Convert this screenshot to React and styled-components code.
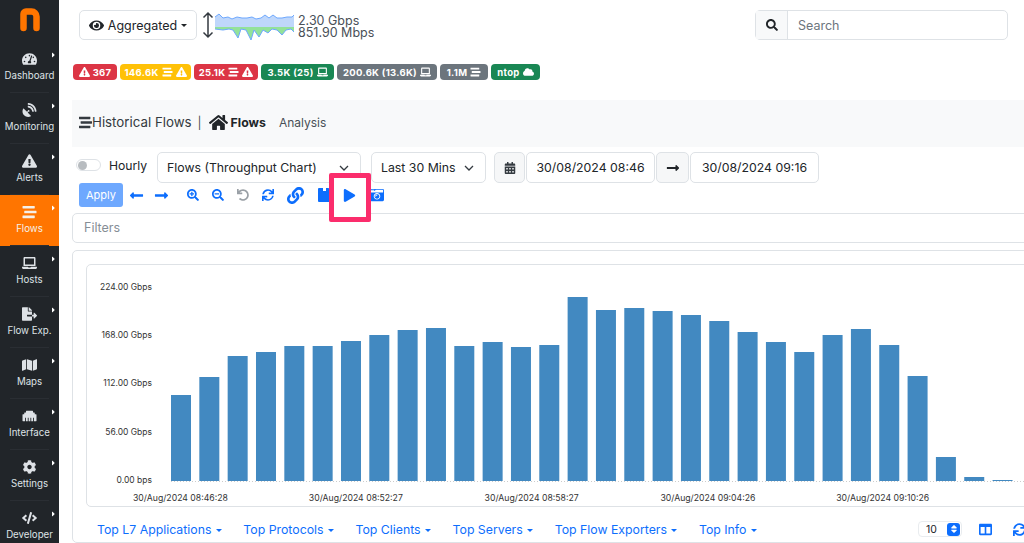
import React from "react";
import styled, { createGlobalStyle } from "styled-components";
import {
  FaCalendarAlt, FaCameraRetro, FaCaretRight, FaCloud, FaCode, FaCog, FaColumns,
  FaEthernet, FaExclamationTriangle, FaEye, FaFileExport, FaHome, FaLaptop, FaLink, FaLongArrowAltLeft,
  FaLongArrowAltRight, FaMap, FaPlay, FaSatelliteDish, FaSearch, FaSearchMinus, FaSearchPlus,
  FaStream, FaSync, FaTachometerAlt, FaUndo, FaSort,
} from "react-icons/fa";

const GlobalStyle = createGlobalStyle`
  html, body { margin: 0; padding: 0; background: #fff; overflow: hidden; }
  body { font-family: Inter, "Liberation Sans", sans-serif; color: #212529; }
  * { box-sizing: border-box; }
`;

//--- LAYOUT ---//

const Page = styled.div`
  display: flex;
  width: 1024px;
  height: 543px;
  overflow: hidden;
`;

const Sidebar = styled.nav`
  flex: 0 0 59px;
  background: #212529;
  display: flex;
  flex-direction: column;
  overflow: hidden;
`;

const Logo = styled.div`
  flex: 0 0 42px;
  display: flex;
  justify-content: center;
  padding-top: 5px;
`;

const NavItem = styled.div`
  position: relative;
  flex: 0 0 51px;
  display: flex;
  flex-direction: column;
  align-items: center;
  padding-top: 10px;
  gap: 4px;
  color: ${({ $active }) => ($active ? "#f5f0e8" : "#dee2e6")};
  background: ${({ $active }) => ($active ? "#ff7500" : "transparent")};
  font-size: 9.7px;
  line-height: 12px;
  white-space: nowrap;
  svg.main { width: 15px; height: 14px; }
  &::after {
    content: "";
    position: absolute;
    left: 10px;
    right: 10px;
    bottom: 0;
    height: 1px;
    background: #2a2e33;
  }
`;

const NavCaret = styled(FaCaretRight)`
  position: absolute;
  top: 9px;
  right: 2px;
  width: 7px;
  height: 8px;
  color: #fff;
`;

const Main = styled.main`
  flex: 1;
  min-width: 0;
  padding-left: 13px;
  display: flex;
  flex-direction: column;
  position: relative;
`;

//--- TOP BAR ---//

const TopBar = styled.header`
  display: flex;
  align-items: center;
  height: 30px;
  margin-top: 10px;
  padding-left: 7px;
`;

const ViewButton = styled.button`
  width: 118px;
  height: 30px;
  border: 1px solid #dee2e6;
  border-radius: 5px;
  background: #fff;
  display: flex;
  align-items: center;
  justify-content: center;
  gap: 4px;
  font: 400 12.5px Inter, sans-serif;
  color: #212529;
  padding: 0;
`;

const Caret = styled.span`
  display: inline-block;
  width: 0;
  height: 0;
  border-left: 3.5px solid transparent;
  border-right: 3.5px solid transparent;
  border-top: 3.5px solid ${({ $color }) => $color || "currentColor"};
  margin-left: ${({ $left }) => $left || 0}px;
  vertical-align: middle;
`;

const Speed = styled.div`
  font-size: 12.5px;
  line-height: 12px;
  color: #495057;
  margin-left: 3px;
  padding-top: 4px;
`;

const Search = styled.div`
  margin-left: auto;
  margin-right: 16px;
  width: 253px;
  height: 30px;
  display: flex;
  border: 1px solid #dee2e6;
  border-radius: 5px;
  font-size: 12.5px;
  color: #6c757d;
`;

const SearchIcon = styled.div`
  width: 32px;
  display: flex;
  align-items: center;
  justify-content: center;
  background: #f8f9fa;
  border-right: 1px solid #dee2e6;
  color: #212529;
`;

const SearchText = styled.div`
  padding-left: 10px;
  line-height: 29px;
`;

const Badges = styled.div`
  display: flex;
  gap: 3px;
  margin-top: 24px;
  padding-left: 1px;
`;

const Badge = styled.span`
  height: 16px;
  width: ${({ $w }) => $w}px;
  border-radius: 4px;
  display: inline-flex;
  align-items: center;
  justify-content: center;
  gap: 3px;
  font-size: 9.5px;
  font-weight: 700;
  letter-spacing: 0.3px;
  color: #fff;
  white-space: nowrap;
  background: ${({ $bg }) => $bg};
  svg { width: 11px; height: 10px; }
`;

//--- TITLE ---//

const TitleBar = styled.div`
  margin-top: 20px;
  height: 47px;
  padding: 0 0 3px 7px;
  background: #f8f9fa;
  display: flex;
  align-items: center;
  font-size: 13.3px;
  color: #343a40;
`;

const Separator = styled.span`
  margin: 0 7px 0 6px;
  font-size: 12px;
  color: #495057;
`;

const ActiveTab = styled.span`
  display: inline-flex;
  align-items: center;
  gap: 3px;
  font-size: 12.3px;
  font-weight: 700;
  color: #212529;
`;

const PlainTab = styled.span`
  margin-left: 13px;
  font-size: 12px;
  color: #495057;
`;

//--- FILTER CONTROLS ---//

const Controls = styled.div`
  position: relative;
  margin-top: 5px;
`;

const ControlRow = styled.div`
  display: flex;
  align-items: center;
  height: 31px;
  padding-left: 4px;
`;

const Toggle = styled.span`
  width: 25px;
  height: 12px;
  margin-bottom: 5px;
  border: 1px solid #dee2e6;
  border-radius: 6px;
  background: #fff;
  display: flex;
  align-items: center;
  padding-left: 1px;
  &::before {
    content: "";
    width: 9px;
    height: 9px;
    border-radius: 50%;
    background: #b8bcc0;
  }
`;

const ToggleLabel = styled.span`
  width: 48px;
  margin-left: 8px;
  font-size: 12.2px;
  color: #212529;
  padding-bottom: 4px;
`;

const Select = styled.div`
  width: ${({ $w }) => $w}px;
  height: 31px;
  margin-right: ${({ $right }) => $right || 0}px;
  border: 1px solid #dee2e6;
  border-radius: 5px;
  background: #fff;
  display: flex;
  align-items: center;
  justify-content: space-between;
  padding: 0 11px 0 9px;
  font-size: 12.3px;
  color: #212529;
  white-space: nowrap;
`;

const Addon = styled.div`
  width: ${({ $w }) => $w}px;
  height: 31px;
  margin-left: ${({ $left }) => $left ?? 1}px;
  margin-right: 1px;
  border: 1px solid #dee2e6;
  border-radius: 5px;
  background: #f6f7f8;
  display: flex;
  align-items: center;
  justify-content: center;
  color: #343a40;
`;

const DateBox = styled.div`
  width: ${({ $w }) => $w}px;
  height: 31px;
  border: 1px solid #dee2e6;
  border-radius: 5px;
  display: flex;
  align-items: center;
  justify-content: center;
  font-size: 12.3px;
  color: #212529;
`;

const ActionRow = styled.div`
  display: flex;
  align-items: center;
  height: 24px;
  padding-left: 7px;
`;

const ApplyButton = styled.button`
  width: 44px;
  height: 24px;
  border: 0;
  border-radius: 3px;
  background: #6ea8fe;
  color: #fff;
  font: 400 11px Inter, sans-serif;
  margin-right: 1px;
  padding: 0;
`;

const IconButton = styled.span`
  width: 25px;
  display: flex;
  justify-content: center;
  margin-left: ${({ $left }) => $left || 0}px;
  color: ${({ $muted }) => ($muted ? "#9aa0a6" : "#0d6efd")};
  svg { width: ${({ $size }) => $size || 12}px; height: ${({ $size }) => $size || 12}px; }
`;

const Highlight = styled.div`
  position: absolute;
  left: 257px;
  top: 21px;
  width: 42px;
  height: 49px;
  border: 5px solid #fb2d6c;
  border-radius: 2px;
  background: #fff;
  pointer-events: none;
`;

const PlayMark = styled(FaPlay)`
  position: absolute;
  left: 9px;
  top: 11px;
  width: 13px;
  height: 13px;
  color: #0d6efd;
`;

const FilterInput = styled.div`
  margin-top: 6px;
  height: 30px;
  width: 980px;
  border: 1px solid #dee2e6;
  border-radius: 5px;
  padding-left: 11px;
  font-size: 12.5px;
  line-height: 28px;
  color: #868e96;
`;

//--- CHART CARD ---//

const Card = styled.section`
  margin-top: 7px;
  width: 980px;
  border: 1px solid #dee2e6;
  border-radius: 5px;
  padding: 13px 13px 0;
  flex: 1;
`;

const ChartBox = styled.div`
  width: 960px;
  height: 243px;
  border: 1px solid #dee2e6;
  border-radius: 5px;
`;

const Tabs = styled.div`
  display: flex;
  align-items: center;
  height: 22px;
  margin-top: 11px;
  padding-left: 11px;
  font-size: 12.3px;
  color: #0d6efd;
  width: 940px;
`;

const TabLink = styled.span`
  margin-right: 21.500px;
  white-space: nowrap;
`;

const PageSize = styled.div`
  margin-left: auto;
  width: 44px;
  height: 16px;
  border: 1px solid #e9ecef;
  border-radius: 4px;
  display: flex;
  align-items: center;
  justify-content: space-between;
  padding: 0 1px 0 7px;
  font-size: 10.5px;
  color: #212529;
`;

const Stepper = styled.span`
  width: 13px;
  height: 13px;
  border-radius: 3px;
  background: #0d6efd;
  color: #fff;
  display: flex;
  align-items: center;
  justify-content: center;
  svg { width: 8px; height: 10px; }
`;

const TabIcon = styled.span`
  display: flex;
  margin-left: ${({ $left }) => $left}px;
  color: #0d6efd;
`;

//--- DATA ---//

const navItems = [
  { label: "Dashboard", Icon: FaTachometerAlt },
  { label: "Monitoring", Icon: FaSatelliteDish },
  { label: "Alerts", Icon: FaExclamationTriangle },
  { label: "Flows", Icon: FaStream, active: true },
  { label: "Hosts", Icon: FaLaptop },
  { label: "Flow Exp.", Icon: FaFileExport },
  { label: "Maps", Icon: FaMap },
  { label: "Interface", Icon: FaEthernet },
  { label: "Settings", Icon: FaCog },
  { label: "Developer", Icon: FaCode },
];

const barTops = [395, 377, 356, 352, 346, 346, 341, 335, 330, 328, 346, 342, 347, 345, 297, 310, 308, 311, 315, 321, 332, 342, 352, 335, 329, 345, 376, 457, 477, 480];
const yLabels = ["224.00 Gbps", "168.00 Gbps", "112.00 Gbps", "56.00 Gbps", "0.00 bps"];
const xLabels = ["30/Aug/2024 08:46:28", "30/Aug/2024 08:52:27", "30/Aug/2024 08:58:27", "30/Aug/2024 09:04:26", "30/Aug/2024 09:10:26"];

const upper = "0,7 4,4 8,8 13,7 17,9 22,7 27,8 32,8 37,7 41,9 46,8 50,5 54,8 58,5 62,8 67,8 72,7 77,7 79,5";
const lower = "0,19 8,20 14,19 18,20 23,28 26,19 31,20 36,30 39,20 44,27 48,20 53,23 57,19 62,20 67,25 71,20 76,19 79,22";

const Sparkline = () => (
  <svg width="80" height="30" viewBox="0 0 80 30" style={{ marginLeft: 1 }}>
    <polygon points={`${upper} 79,17 0,17`} fill="#bfd7fb" />
    <polyline points={upper} fill="none" stroke="#6ea8fe" strokeWidth="1" />
    <polygon points={`${lower} 79,17 0,17`} fill="#93e29a" />
    <polyline points={lower} fill="none" stroke="#6ea8fe" strokeWidth="1" />
  </svg>
);

const UpDownArrow = () => (
  <svg width="12" height="28" viewBox="0 0 12 28" style={{ marginLeft: 5 }}>
    <path d="M6 2v24M1.5 6.5L6 2l4.500 4.500M1.5 21.500L6 26l4.500-4.500" fill="none" stroke="#343a40" strokeWidth="1.500" />
  </svg>
);

const ChevronDown = () => (
  <svg width="10" height="6" viewBox="0 0 10 6">
    <path d="M1 1l4 4 4-4" fill="none" stroke="#343a40" strokeWidth="1.3" />
  </svg>
);

const SaveIcon = () => (
  <svg viewBox="0 0 14 14" fill="currentColor" style={{ width: 14, height: 14 }}>
    <path d="M0 1a1 1 0 0 1 1-1h9.500L14 3.500V13a1 1 0 0 1-1 1H1a1 1 0 0 1-1-1z" />
    <rect x="5" y="0" width="3" height="3" fill="#fff" />
  </svg>
);

// svg origin sits at the chart box corner (87, 265 on the page)
const Chart = () => (
  <svg width="958" height="241" viewBox="0 0 958 241">
    {yLabels.map((label, i) => (
      <text key={label} x="65" y={25 + i * 48.2} textAnchor="end" fontSize="8.5" fill="#333" fontFamily="Inter, sans-serif">
        {label}
      </text>
    ))}
    {barTops.map((top, i) => (
      <rect key={i} x={84 + i * 28.33} y={top - 265} width="20" height={481 - top} fill="#4289c1" />
    ))}
    <line x1="84" y1="216.5" x2="940" y2="216.5" stroke="#ccc" strokeDasharray="1 2" />
    {xLabels.map((label, i) => (
      <text key={label} x={46 + i * 175.8} y="236" fontSize="8.7" fill="#333" fontFamily="Inter, sans-serif">
        {label}
      </text>
    ))}
  </svg>
);

const App = () => (
  <Page>
    <GlobalStyle />
    <Sidebar>
      <Logo>
        <svg width="22" height="28" viewBox="0 0 22 28">
          <path d="M4.500 23V9a2.500 2.500 0 0 1 2.500-2.500h5.500a5 5 0 0 1 5 5V23" fill="none" stroke="#ff7500" strokeWidth="6.500" strokeLinecap="round" strokeLinejoin="round" />
        </svg>
      </Logo>
      {navItems.map(({ label, Icon, active }) => (
        <NavItem key={label} $active={active}>
          <Icon className="main" />
          {label}
          <NavCaret />
        </NavItem>
      ))}
    </Sidebar>
    <Main>
      <TopBar>
        <ViewButton>
          <FaEye size={15} /> Aggregated <Caret />
        </ViewButton>
        <UpDownArrow />
        <Sparkline />
        <Speed>
          2.30 Gbps
          <br />
          851.90 Mbps
        </Speed>
        <Search>
          <SearchIcon>
            <FaSearch size={12} />
          </SearchIcon>
          <SearchText>Search</SearchText>
        </Search>
      </TopBar>

      <Badges>
        <Badge $bg="#dc3545" $w={44}>
          <FaExclamationTriangle /> 367
        </Badge>
        <Badge $bg="#ffc107" $w={71}>
          146.6K <FaStream /> <FaExclamationTriangle />
        </Badge>
        <Badge $bg="#dc3545" $w={64}>
          25.1K <FaStream /> <FaExclamationTriangle />
        </Badge>
        <Badge $bg="#198754" $w={73}>
          3.5K (25) <FaLaptop />
        </Badge>
        <Badge $bg="#6c757d" $w={100}>
          200.6K (13.6K) <FaLaptop />
        </Badge>
        <Badge $bg="#6c757d" $w={48}>
          1.1M <FaStream />
        </Badge>
        <Badge $bg="#198754" $w={49}>
          ntop <FaCloud />
        </Badge>
      </Badges>

      <TitleBar>
        <FaStream size={13} />
        Historical Flows
        <Separator>|</Separator>
        <ActiveTab>
          <FaHome size={19} /> Flows
        </ActiveTab>
        <PlainTab>Analysis</PlainTab>
      </TitleBar>

      <Controls>
        <ControlRow>
          <Toggle />
          <ToggleLabel>Hourly</ToggleLabel>
          <Select $w={204} $right={10}>
            Flows (Throughput Chart)
            <ChevronDown />
          </Select>
          <Select $w={115} $right={8}>
            Last 30 Mins
            <ChevronDown />
          </Select>
          <Addon $w={31} $left={0}>
            <FaCalendarAlt size={12} />
          </Addon>
          <DateBox $w={129}>30/08/2024 08:46</DateBox>
          <Addon $w={33}>
            <FaLongArrowAltRight size={14} color="#212529" />
          </Addon>
          <DateBox $w={129}>30/08/2024 09:16</DateBox>
        </ControlRow>
        <ActionRow>
          <ApplyButton>Apply</ApplyButton>
          <IconButton $size={15}><FaLongArrowAltLeft /></IconButton>
          <IconButton $size={15}><FaLongArrowAltRight /></IconButton>
          <IconButton $left={6}><FaSearchPlus /></IconButton>
          <IconButton><FaSearchMinus /></IconButton>
          <IconButton $muted><FaUndo /></IconButton>
          <IconButton><FaSync /></IconButton>
          <IconButton $left={3} $size={17}><FaLink /></IconButton>
          <IconButton $left={4}><SaveIcon /></IconButton>
          <IconButton $left={27} $size={14}><FaCameraRetro /></IconButton>
        </ActionRow>
        <Highlight>
          <PlayMark />
        </Highlight>
        <FilterInput>Filters</FilterInput>
      </Controls>

      <Card>
        <ChartBox>
          <Chart />
        </ChartBox>
        <Tabs>
          <TabLink>Top L7 Applications <Caret $left={1} /></TabLink>
          <TabLink>Top Protocols <Caret $left={1} /></TabLink>
          <TabLink>Top Clients <Caret $left={1} /></TabLink>
          <TabLink>Top Servers <Caret $left={1} /></TabLink>
          <TabLink>Top Flow Exporters <Caret $left={1} /></TabLink>
          <TabLink>Top Info <Caret $left={1} /></TabLink>
          <PageSize>
            10
            <Stepper><FaSort /></Stepper>
          </PageSize>
          <TabIcon $left={17}><FaColumns size={13} /></TabIcon>
          <TabIcon $left={21}><FaSync size={13} /></TabIcon>
        </Tabs>
      </Card>
    </Main>
  </Page>
);

export default App;
